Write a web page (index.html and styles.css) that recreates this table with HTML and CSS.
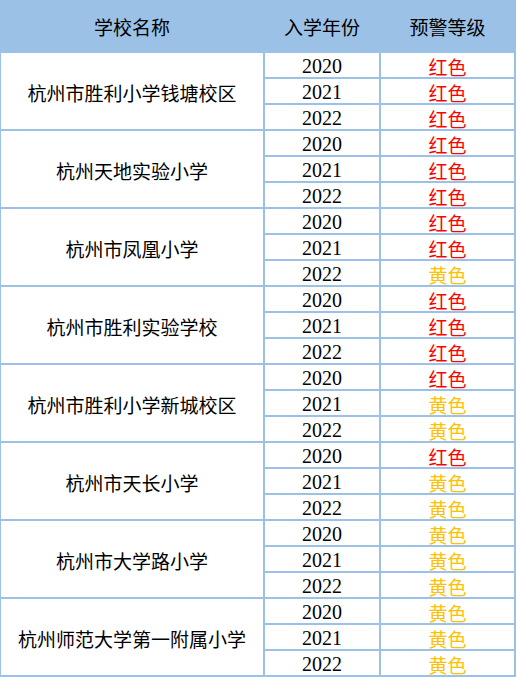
FILE: index.html
```html
<!DOCTYPE html>
<html lang="zh-CN">
<head>
<meta charset="utf-8">
<title>预警等级</title>
<link rel="stylesheet" href="styles.css">
</head>
<body>
<table class="grid">
  <thead>
    <tr>
      <th class="c-school">学校名称</th>
      <th class="c-year">入学年份</th>
      <th class="c-level">预警等级</th>
    </tr>
  </thead>
  <tbody>
    <tr><td class="school" rowspan="3">杭州市胜利小学钱塘校区</td><td class="year">2020</td><td class="lvl red">红色</td></tr>
    <tr><td class="year">2021</td><td class="lvl red">红色</td></tr>
    <tr><td class="year">2022</td><td class="lvl red">红色</td></tr>

    <tr><td class="school" rowspan="3">杭州天地实验小学</td><td class="year">2020</td><td class="lvl red">红色</td></tr>
    <tr><td class="year">2021</td><td class="lvl red">红色</td></tr>
    <tr><td class="year">2022</td><td class="lvl red">红色</td></tr>

    <tr><td class="school" rowspan="3">杭州市凤凰小学</td><td class="year">2020</td><td class="lvl red">红色</td></tr>
    <tr><td class="year">2021</td><td class="lvl red">红色</td></tr>
    <tr><td class="year">2022</td><td class="lvl yellow">黄色</td></tr>

    <tr><td class="school" rowspan="3">杭州市胜利实验学校</td><td class="year">2020</td><td class="lvl red">红色</td></tr>
    <tr><td class="year">2021</td><td class="lvl red">红色</td></tr>
    <tr><td class="year">2022</td><td class="lvl red">红色</td></tr>

    <tr><td class="school" rowspan="3">杭州市胜利小学新城校区</td><td class="year">2020</td><td class="lvl red">红色</td></tr>
    <tr><td class="year">2021</td><td class="lvl yellow">黄色</td></tr>
    <tr><td class="year">2022</td><td class="lvl yellow">黄色</td></tr>

    <tr><td class="school" rowspan="3">杭州市天长小学</td><td class="year">2020</td><td class="lvl red">红色</td></tr>
    <tr><td class="year">2021</td><td class="lvl yellow">黄色</td></tr>
    <tr><td class="year">2022</td><td class="lvl yellow">黄色</td></tr>

    <tr><td class="school" rowspan="3">杭州市大学路小学</td><td class="year">2020</td><td class="lvl yellow">黄色</td></tr>
    <tr><td class="year">2021</td><td class="lvl yellow">黄色</td></tr>
    <tr><td class="year">2022</td><td class="lvl yellow">黄色</td></tr>

    <tr><td class="school" rowspan="3">杭州师范大学第一附属小学</td><td class="year">2020</td><td class="lvl yellow">黄色</td></tr>
    <tr><td class="year">2021</td><td class="lvl yellow">黄色</td></tr>
    <tr><td class="year">2022</td><td class="lvl yellow">黄色</td></tr>
  </tbody>
</table>
</body>
</html>
```
FILE: styles.css
```css
html, body {
  margin: 0;
  padding: 0;
  background: #ffffff;
}

.grid {
  border-collapse: separate;
  border-spacing: 0;
  table-layout: fixed;
  font-family: "Noto Sans CJK SC", "Noto Sans", sans-serif;
  font-size: 19px;
  color: #000000;
}

.grid th,
.grid td {
  padding: 0;
  text-align: center;
  vertical-align: middle;
  border-right: 2px solid #9bc2e6;
  border-bottom: 2px solid #9bc2e6;
  white-space: nowrap;
}

.grid th {
  background: #9bc2e6;
  font-weight: normal;
  height: 49px;
  padding-top: 2px;
  line-height: 24px;
}

.c-school { width: 262px; border-left: 1px solid #9bc2e6; }
.c-year { width: 114px; }
.c-level { width: 133px; }

.grid td {
  height: 21px;
  padding-top: 3px;
  line-height: 21px;
}

.grid td.school {
  border-left: 1px solid #9bc2e6;
}

.year {
  font-family: "Liberation Serif", "Times New Roman", serif;
  font-size: 20px;
}

.red { color: #ff0000; }
.yellow { color: #ffc000; }
```
